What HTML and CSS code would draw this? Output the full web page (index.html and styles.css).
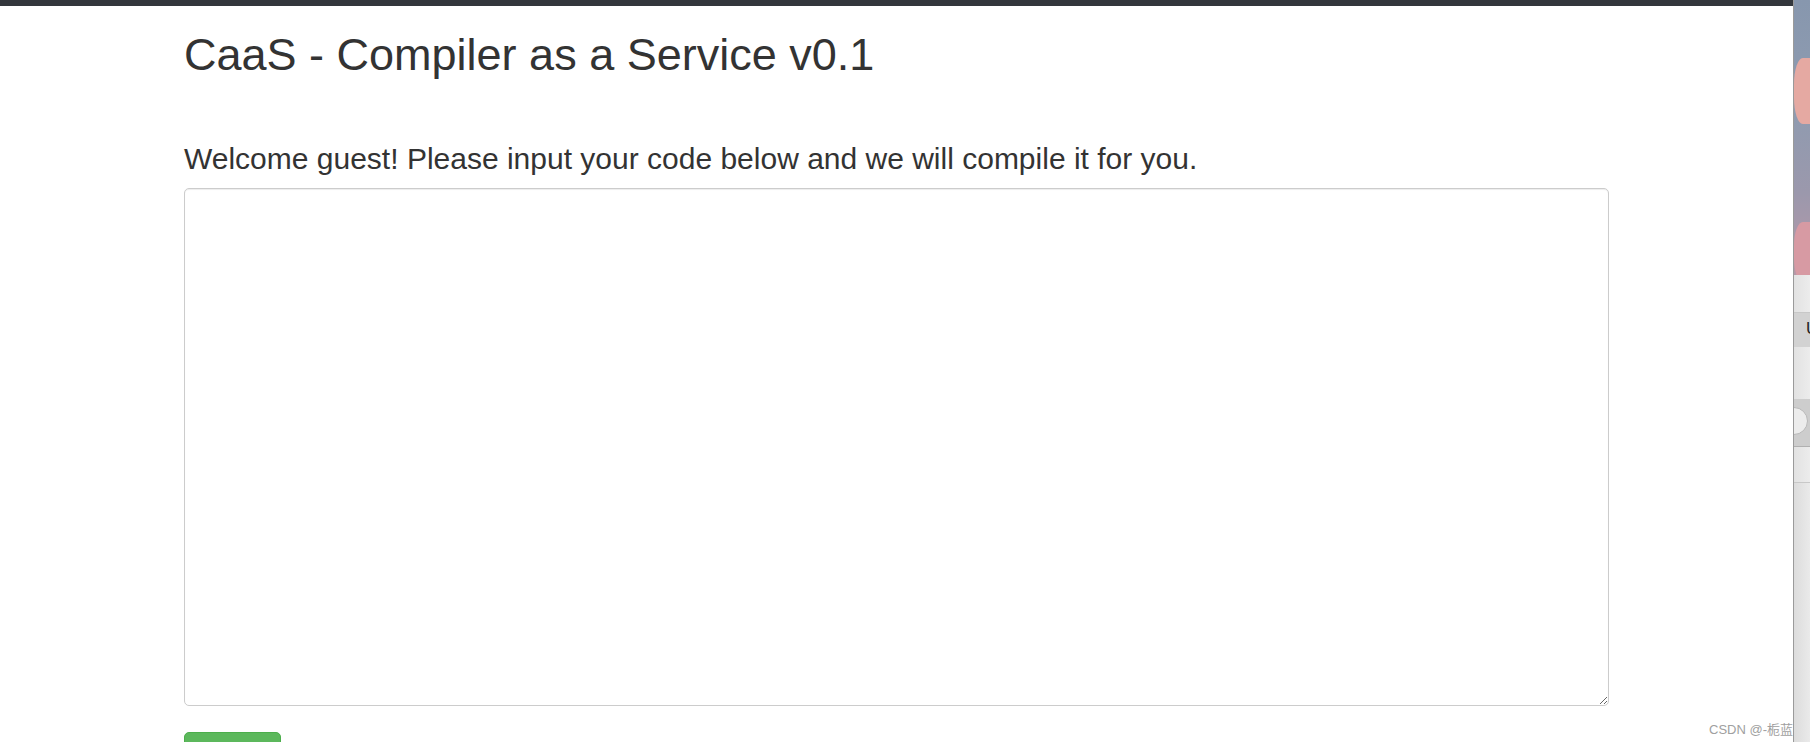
FILE: index.html
```html
<!DOCTYPE html>
<html lang="en">
<head>
<meta charset="utf-8">
<title>CaaS - Compiler as a Service v0.1</title>
<link rel="stylesheet" href="styles.css">
</head>
<body>
<div class="page">
  <div class="topbar"></div>
  <div class="container">
    <h1 class="title">CaaS - Compiler as a Service v0.1</h1>
    <form class="form">
      <h3 class="lead">Welcome guest! Please input your code below and we will compile it for you.</h3>
      <textarea class="code"></textarea>
      <button type="button" class="btn">Compile</button>
    </form>
  </div>
  <div class="watermark">CSDN @-栀蓝-</div>
</div>
<div class="strip">
  <div class="sky">
    <div class="cloud cloud-a"></div>
    <div class="cloud cloud-b"></div>
  </div>
  <div class="band band-light1"></div>
  <div class="band band-dark1"><span class="glyph">U</span></div>
  <div class="band band-light2"></div>
  <div class="band band-dark2"><span class="circle"></span></div>
  <div class="band band-light3"></div>
  <div class="band band-rest"></div>
</div>
</body>
</html>
```

FILE: styles.css
```css
html, body {
  margin: 0;
  padding: 0;
  height: 742px;
  overflow: hidden;
  background: #fff;
}
body {
  display: flex;
  font-family: "Liberation Sans", Arial, sans-serif;
  color: #333;
}
.page {
  position: relative;
  width: 1793px;
  flex: none;
  background: #fff;
}
.topbar {
  height: 6px;
  background: #33373c;
}
.container {
  padding-left: 184px;
  width: 1425px;
}
.title {
  font-size: 45px;
  font-weight: 500;
  line-height: 1.1;
  margin: 24px 0 0 0;
}
.form {
  margin: 0;
}
.lead {
  font-size: 30px;
  font-weight: 400;
  line-height: 33px;
  margin: 62px 0 13px 0;
}
.code {
  display: block;
  box-sizing: border-box;
  width: 1425px;
  height: 518px;
  margin: 0;
  border: 1px solid #ccc;
  border-radius: 5px;
  box-shadow: inset 0 1px 1px rgba(0,0,0,.075);
  background: #fff;
  resize: vertical;
  padding: 7px 15px;
  font-family: "Liberation Sans", Arial, sans-serif;
  font-size: 17.5px;
}
.btn {
  display: block;
  margin-top: 26px;
  width: 97px;
  height: 42.5px;
  background: #5cb85c;
  border: 1px solid #4cae4c;
  border-radius: 5px;
  color: #fff;
  font-family: "Liberation Sans", Arial, sans-serif;
  font-size: 17.5px;
  padding: 7.5px 15px;
}
.watermark {
  position: absolute;
  left: 1709px;
  top: 719px;
  font-family: "Liberation Sans", "Noto Sans CJK SC", sans-serif;
  font-size: 13px;
  color: #a0a0a0;
  white-space: nowrap;
}
.strip {
  width: 17px;
  flex: none;
  display: flex;
  flex-direction: column;
  border-left: 1px solid #9a9a9a;
  box-sizing: border-box;
  overflow: hidden;
}
.sky {
  position: relative;
  height: 275px;
  background: linear-gradient(to bottom, #8797ae 0%, #8f9bb0 40%, #9b98ac 70%, #b898a8 100%);
  overflow: hidden;
}
.cloud {
  position: absolute;
  left: 0;
  right: -6px;
  border-radius: 40% 0 0 40%;
}
.cloud-a {
  top: 58px;
  height: 66px;
  background: #e5a9a2;
}
.cloud-b {
  top: 222px;
  height: 60px;
  background: #d79aa3;
}
.band {
  position: relative;
}
.band-light1 {
  height: 37px;
  background: linear-gradient(to right, #e2e2e2, #ececec);
  border-bottom: 1px solid #c8c8c8;
}
.band-dark1 {
  height: 34px;
  background: #d2d2d2;
}
.glyph {
  position: absolute;
  left: 12px;
  top: 7px;
  font-size: 17px;
  color: #222;
  line-height: 1;
}
.band-light2 {
  height: 52px;
  background: linear-gradient(to right, #e2e2e2, #ececec);
}
.band-dark2 {
  height: 47px;
  background: #cdcdcd;
  border-bottom: 1px solid #b0b0b0;
}
.circle {
  position: absolute;
  left: -14px;
  top: 8px;
  width: 26px;
  height: 26px;
  border-radius: 50%;
  background: #ececec;
  border: 1px solid #b8b8b8;
}
.band-light3 {
  height: 35px;
  background: linear-gradient(to right, #e2e2e2, #ececec);
  border-bottom: 1px solid #c8c8c8;
}
.band-rest {
  flex: 1;
  background: linear-gradient(to right, #dcdcdc, #eaeaea);
}
```
